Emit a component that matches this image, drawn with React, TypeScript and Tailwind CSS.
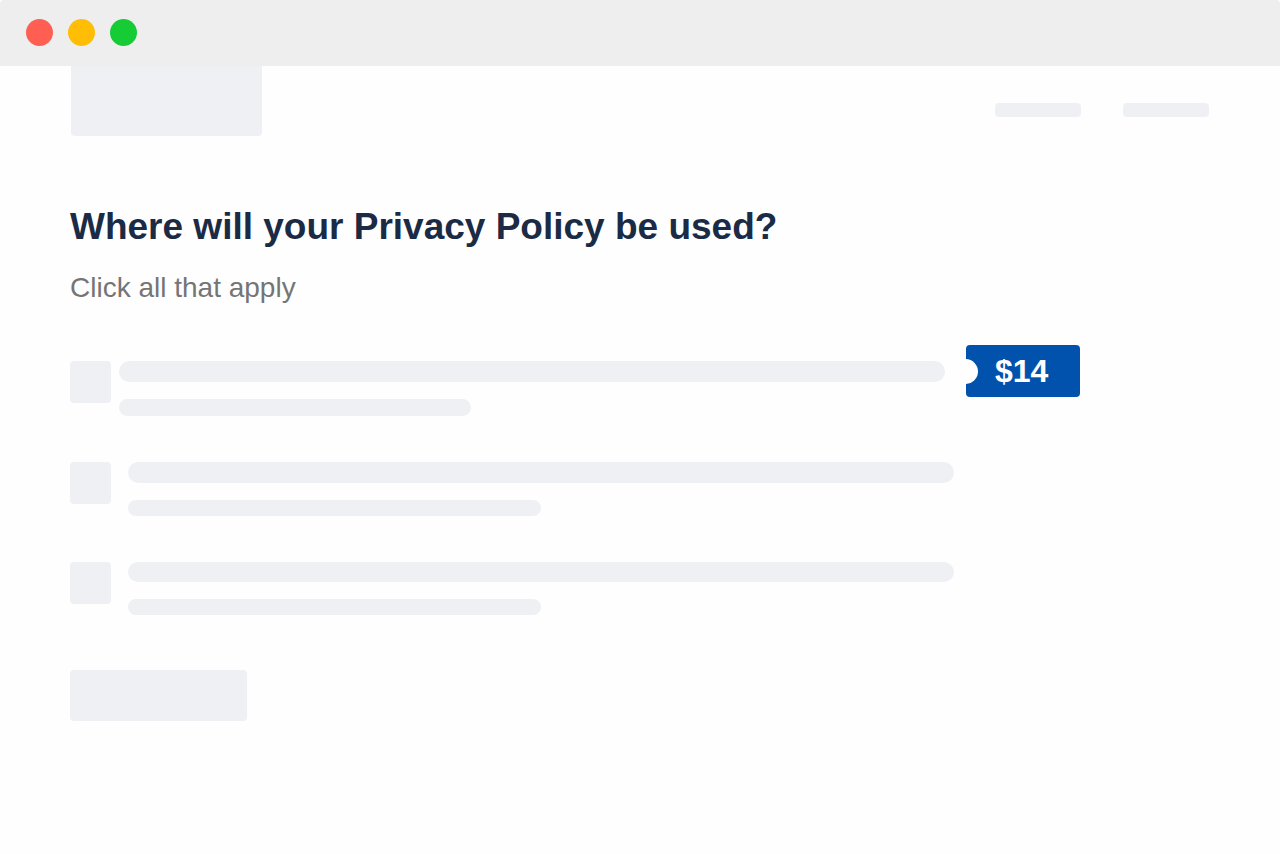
import { useState } from "react";
import clsx from "clsx";

const options = [
  { id: "website", gap: "gap-2",  title: "h-[21px]", note: "h-[17px] max-w-[352px]", price: "$14" },
  { id: "app",     gap: "gap-[17px]", title: "h-[21px]", note: "h-4 max-w-[413px]" },
  { id: "other",   gap: "gap-[17px]", title: "h-5",      note: "h-4 max-w-[413px]" },
];

function WindowBar() {
  return (
    <div className="flex h-[66px] items-center gap-[15px] rounded-t bg-[#eeeeee] px-[26px] pb-px">
      <span className="h-[27px] w-[27px] rounded-full bg-[#ff5f52]"/>
      <span className="h-[27px] w-[27px] rounded-full bg-[#ffbe05]"/>
      <span className="h-[27px] w-[27px] rounded-full bg-[#15cc35]"/>
    </div>
  );
}

function PriceTag({ price }: { price: string }) {
  return (
    <div className="relative -mt-4 ml-[21px] flex h-[52px] w-[114px] shrink-0 items-center overflow-hidden rounded bg-[#0052ac] pl-[29px]">
      <span className="absolute top-[14px] -left-[13px] h-[25px] w-[25px] rounded-full bg-[#fefefe]"/>
      <span className="text-[32px] leading-none font-bold text-white">{price}</span>
    </div>
  );
}

export default function App() {
  const [picked, setPicked] = useState<string[]>([]);
  const toggle = (id: string) =>
    setPicked(p => (p.includes(id) ? p.filter(x => x !== id) : [...p, id]));

  return (
    <div className="min-h-screen bg-[#fefefe] font-['Liberation_Sans',Arial,sans-serif]">
      <WindowBar/>

      <header className="flex items-start justify-between px-[71px]">
        <div className="h-[70px] w-[191px] rounded-b bg-[#eff0f4]"/>
        <nav aria-label="Main" className="flex gap-[42px] pt-[37px]">
          <a href="#products" aria-label="Products" className="h-[14px] w-[86px] rounded bg-[#eff0f4]"/>
          <a href="#account" aria-label="Account" className="h-[14px] w-[86px] rounded bg-[#eff0f4]"/>
        </nav>
      </header>

      <main className="px-[70px] pt-[71px] pb-16">
        <h1 className="text-[37px] leading-10 font-bold text-[#1b2b45]">Where will your Privacy Policy be used?</h1>
        <p className="mt-[25px] text-[28px] leading-8 text-[#757575]">Click all that apply</p>

        <div className="mt-[57px] flex flex-col gap-[46px]">
          {options.map(o => (
            <div key={o.id} className="flex items-start">
              <label className={clsx("flex min-w-0 flex-1 items-start", o.gap, o.price ? "max-w-[875px]" : "max-w-[884px]")}>
                <input
                  type="checkbox"
                  aria-label={o.id}
                  checked={picked.includes(o.id)}
                  onChange={() => toggle(o.id)}
                  className="h-[42px] w-[41px] shrink-0 appearance-none rounded bg-[#eff0f4] checked:bg-[#0052ac]"
                />
                <span className="flex min-w-0 flex-1 flex-col gap-[17px]">
                  <span className={clsx("rounded-full bg-[#eff0f4]", o.title)}/>
                  <span className={clsx("w-full rounded-full bg-[#eff0f4]", o.note)}/>
                </span>
              </label>
              {o.price && <PriceTag price={o.price}/>}
            </div>
          ))}
        </div>

        <button type="button" aria-label="Next" className="mt-[55px] block h-[51px] w-[177px] rounded bg-[#eff0f4]"/>
      </main>
    </div>
  );
}
